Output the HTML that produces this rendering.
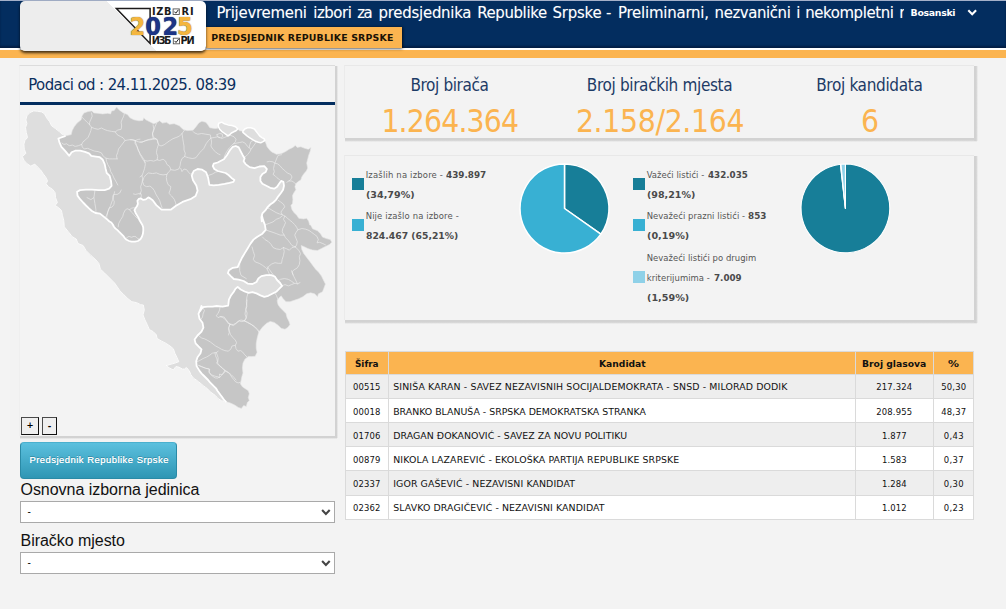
<!DOCTYPE html>
<html lang="bs">
<head>
<meta charset="utf-8">
<title>Prijevremeni izbori za predsjednika Republike Srpske</title>
<style>
*{box-sizing:border-box;margin:0;padding:0}
html,body{width:1006px;height:609px;overflow:hidden;background:#f3f3f3}
body{position:relative;font-family:"DejaVu Sans Condensed","DejaVu Sans","Liberation Sans",sans-serif;font-size:9.4px;color:#000}
.ar{font-family:"Liberation Sans",sans-serif}
b,.b{font-family:"DejaVu Sans","Liberation Sans",sans-serif;font-weight:bold}
.bc{font-family:"DejaVu Sans Condensed","DejaVu Sans",sans-serif;font-weight:bold}
.dvs{font-family:"DejaVu Sans","Liberation Sans",sans-serif}
.dv{font-family:"DejaVu Sans Condensed","DejaVu Sans","Liberation Sans",sans-serif}
.abs{position:absolute}
.t{position:absolute;white-space:nowrap;line-height:1}
.c{text-align:center}
/* header */
#hdr{position:absolute;left:0;top:0;width:1006px;height:48px;background:#032d5f;box-shadow:inset 0 -2px 2px rgba(0,0,20,.35)}
#wline{position:absolute;left:0;top:48px;width:1006px;height:2px;background:#fff}
#topline{position:absolute;left:0;top:0;width:1006px;height:1px;background:#a4b0c9}
#stripe{position:absolute;left:0;top:50px;width:1006px;height:8px;background:#fbb450}
#logo{position:absolute;left:20px;top:1px;width:186px;height:49.7px;border-radius:5px;background:linear-gradient(225deg,#ffffff 0,#ffffff 42.1%,#ededed 42.3%,#ededed 100%);box-shadow:0 2px 3px rgba(0,0,0,.75)}
#tab{position:absolute;left:206px;top:27px;width:196px;height:21px;background:#fbb450;box-shadow:0 0 3px 0.5px rgba(0,0,0,.85)}
#title{position:absolute;left:210px;top:0;width:693.5px;height:27px;overflow:hidden;color:#fff;font-size:16.6px;font-family:"DejaVu Sans Condensed","Liberation Sans",sans-serif;text-shadow:0 0 1px rgba(255,255,255,.3)}
/* panels */
.panel{position:absolute;background:#f3f3f3;border-top:1px solid #e8e8e8;border-left:1px solid #ebebeb}
.shr{position:absolute;background:linear-gradient(to right,#d2d2d2 0,#d2d2d2 55%,#e4e4e4 80%,#f3f3f3 100%)}
.shb{position:absolute;background:linear-gradient(to bottom,#d2d2d2 0,#d2d2d2 55%,#e4e4e4 80%,#f3f3f3 100%)}
.navy{color:#1d3b66}
.org{color:#fbb450}
.leg{color:#555}
.legb{color:#4a4a4a}
.sw{position:absolute;width:12px;height:12px}
/* table */
.cell{position:absolute;border-right:1px solid #ddd;border-bottom:1px solid #ddd}
.hd{background:#fbb450}
.odd{background:#eeeeee}
.evn{background:#ffffff}
.sel{position:absolute;left:20px;width:315px;height:22px;background:#fff;border:1px solid #a9a9a9}
</style>
</head>
<body>
<div id="hdr"></div>
<div id="topline"></div>
<div id="wline"></div>
<div id="stripe"></div>
<div id="tab"></div>
<div class="t b" style="left:211.2px;top:33.2px;font-size:9.4px;color:#1a1206"><span style="letter-spacing:0.171px">PREDSJEDNIK REPUBLIKE SRPSKE</span></div>
<div id="title">
<div class="t" style="left:6.4px;top:5px;letter-spacing:-0.26px">Prijevremeni</div>
<div class="t" style="left:103.2px;top:5px;letter-spacing:-0.45px">izbori</div>
<div class="t" style="left:147.3px;top:5px;letter-spacing:-1.60px">za</div>
<div class="t" style="left:168.6px;top:5px;letter-spacing:-0.25px">predsjednika</div>
<div class="t" style="left:267.2px;top:5px;letter-spacing:-0.36px">Republike</div>
<div class="t" style="left:342.4px;top:5px;letter-spacing:-0.16px">Srpske</div>
<div class="t" style="left:396.1px;top:5px;letter-spacing:0.00px">-</div>
<div class="t" style="left:408.0px;top:5px;letter-spacing:-0.21px">Preliminarni,</div>
<div class="t" style="left:504.6px;top:5px;letter-spacing:-0.41px">nezvanični</div>
<div class="t" style="left:586.2px;top:5px;letter-spacing:0.00px">i</div>
<div class="t" style="left:595.2px;top:5px;letter-spacing:-0.40px">nekompletni</div>
<div class="t" style="left:689.2px;top:5px;letter-spacing:-0.02px">rezultati</div>
</div>
<div class="t b" style="left:910.6px;top:7.9px;font-size:9.4px;color:#fff"><span style="letter-spacing:-0.315px">Bosanski</span></div>
<svg class="abs" style="left:966px;top:8px" width="12" height="9" viewBox="0 0 12 9"><path d="M2.3 2.3 L6.2 6.2 L10.1 2.3" fill="none" stroke="#fff" stroke-width="2.1"/></svg>
<div id="logo"></div>
<svg class="abs" style="left:110px;top:2px" width="90" height="48" viewBox="110 2 90 48"><path d="M116.4 8.5 L150.1 8.5 L150.1 43.4 Z" fill="none" stroke="#1c1a1a" stroke-width="1.5" stroke-linejoin="miter"/><rect x="173.1" y="8.9" width="6.2" height="5.6" fill="#fff" stroke="#555" stroke-width="0.9"/><path d="M174.4 11.6 L175.8 13.2 L178.4 9.8" fill="none" stroke="#222" stroke-width="1"/><rect x="173.3" y="38.2" width="6.2" height="5.6" fill="#fff" stroke="#555" stroke-width="0.9"/><path d="M174.6 40.9 L176 42.5 L178.6 39.1" fill="none" stroke="#222" stroke-width="1"/></svg>
<div class="t b" style="left:152px;top:6.6px;font-size:9.8px;color:#1a1a1a"><span style="letter-spacing:0.591px">IZB</span></div>
<div class="t b" style="left:181.4px;top:6.6px;font-size:9.8px;color:#1a1a1a"><span style="letter-spacing:1.097px">RI</span></div>
<div class="t b" style="left:151.8px;top:35.9px;font-size:9.8px;color:#1a1a1a"><span style="letter-spacing:-1.520px">ИЗБ</span></div>
<div class="t b" style="left:180.4px;top:35.9px;font-size:9.8px;color:#1a1a1a"><span style="letter-spacing:-1.191px">РИ</span></div>
<div class="t bc" style="left:129.6px;top:14.2px;font-size:25px;color:#f4b63f;text-shadow:0 0 1px #5a4a20">2</div>
<div class="t bc" style="left:145.3px;top:14.2px;font-size:25px;color:#1c3587;text-shadow:0 0 1px #0a1440">0</div>
<div class="t bc" style="left:162.4px;top:14.2px;font-size:25px;color:#1c3587;text-shadow:0 0 1px #0a1440">2</div>
<div class="t bc" style="left:177px;top:14.2px;font-size:25px;color:#f4b63f;text-shadow:0 0 1px #5a4a20">5</div>

<!-- left panel -->
<div class="panel" style="left:19px;top:65px;width:316px;height:371px;border-top-color:#dcdcdc;border-left-color:#efefef"></div><div class="shb" style="left:20px;top:436px;width:317px;height:3px"></div><div class="shr" style="left:335px;top:66px;width:3px;height:372px"></div>
<div class="t navy" style="left:28.3px;top:77.2px;font-size:16.6px;color:#0b2f5e"><span style="letter-spacing:-0.584px">Podaci od : 24.11.2025. 08:39</span></div>
<div class="abs" style="left:20px;top:102px;width:315px;height:3px;background:#032d5f"></div>
<svg class="abs" style="left:0;top:0" width="1006" height="609" viewBox="0 0 1006 609">
<defs><clipPath id="rsclip"><path d="M64.9 136.1 L71.2 134.6 L72.2 130.6 L74.2 126.7 L77.1 123.1 L81.1 119.8 L82.1 115.8 L84.0 112.9 L88.0 111.5 L91.9 110.9 L93.9 112.9 L97.8 113.3 L102.8 113.9 L107.7 113.3 L110.6 113.9 L111.6 110.9 L114.2 110.5 L116.6 107.0 L118.5 109.3 L120.5 110.9 L123.4 112.9 L127.4 114.5 L130.0 117.8 L133.9 119.8 L138.9 120.8 L142.8 120.4 L143.8 117.8 L145.8 119.8 L149.7 121.7 L153.6 123.7 L156.6 122.7 L159.6 120.8 L162.5 123.1 L166.5 122.3 L169.4 124.3 L174.3 123.7 L179.3 125.7 L183.2 129.6 L187.1 130.6 L193.1 130.2 L196.0 126.7 L199.0 122.7 L201.9 121.2 L205.9 122.3 L207.8 124.7 L209.8 127.7 L214.7 128.6 L217.7 128.3 L218.8 123.2 L221.7 122.1 L224.5 123.8 L228.0 124.9 L232.0 125.5 L235.5 126.7 L237.8 129.0 L239.5 130.7 L242.9 131.3 L244.7 129.0 L247.5 127.8 L251.0 127.8 L254.4 129.0 L256.1 131.3 L257.9 133.6 L259.6 135.9 L261.9 137.6 L264.2 138.7 L264.8 140.5 L265.9 143.3 L267.1 146.8 L269.4 149.7 L271.7 152.0 L275.0 153.4 L276.2 154.3 L279.1 153.9 L282.1 153.3 L286.0 151.3 L289.0 149.3 L292.9 147.4 L295.3 145.4 L297.2 147.4 L300.8 146.8 L304.7 148.3 L308.3 149.3 L311.0 147.4 L310.2 151.3 L308.7 155.2 L307.7 159.2 L306.7 163.1 L307.7 168.1 L306.3 171.0 L303.7 174.0 L301.8 176.9 L300.8 179.9 L297.8 181.8 L295.9 183.8 L294.9 186.8 L295.9 189.7 L293.9 192.7 L292.5 195.6 L292.9 199.6 L292.5 203.5 L290.9 205.5 L291.9 209.4 L293.9 212.4 L296.8 215.3 L298.8 218.3 L303.7 218.9 L306.7 218.3 L308.7 221.3 L309.7 225.0 L310.6 224.9 L312.6 228.8 L317.5 230.8 L320.5 233.7 L322.5 237.1 L326.4 238.6 L330.3 239.6 L331.9 242.2 L329.4 244.6 L325.4 246.5 L321.5 248.5 L317.5 250.5 L312.6 250.1 L307.7 248.5 L303.7 246.5 L301.2 245.5 L301.8 249.5 L303.7 253.4 L306.7 257.4 L309.7 261.3 L312.6 265.2 L315.6 269.2 L318.5 272.1 L321.5 276.1 L323.4 280.0 L325.4 284.0 L324.0 287.9 L322.5 291.8 L318.5 293.8 L317.5 296.8 L314.6 293.8 L310.6 292.8 L306.7 293.8 L302.8 296.8 L298.8 298.7 L294.9 300.1 L290.0 301.7 L286.0 301.7 L283.1 298.7 L281.1 295.8 L279.1 297.8 L277.1 300.7 L278.1 304.7 L280.1 307.6 L283.1 310.6 L286.0 313.5 L287.0 317.5 L289.0 321.4 L290.0 324.4 L288.0 327.3 L285.0 329.3 L281.1 328.3 L278.1 325.3 L274.2 322.4 L270.2 321.4 L266.3 323.4 L262.4 327.3 L259.4 331.3 L259.1 331.0 L258.1 334.6 L257.1 338.5 L256.2 343.4 L256.2 348.3 L257.1 352.3 L255.2 356.2 L251.6 356.6 L248.3 356.6 L244.9 359.2 L243.0 363.1 L242.4 368.1 L243.0 373.0 L241.8 376.9 L241.0 380.9 L240.4 383.8 L242.4 386.8 L245.3 388.7 L248.3 390.7 L249.3 393.7 L248.3 397.6 L249.3 400.6 L247.3 402.5 L246.3 406.5 L243.7 405.5 L241.4 408.4 L238.4 407.5 L235.5 405.5 L232.5 403.9 L229.6 402.7 L225.6 401.6 L223.8 401.4 L221.4 400.7 L218.9 399.2 L216.9 397.2 L215.0 395.2 L213.0 393.8 L211.0 392.3 L209.1 390.8 L207.6 388.8 L205.6 387.4 L203.6 385.9 L201.2 383.9 L198.7 381.9 L196.3 380.0 L193.8 378.5 L192.3 376.5 L190.8 374.6 L189.9 372.1 L188.4 369.6 L186.4 367.5 L184.4 369.1 L182.4 369.0 L178.8 367.1 L175.9 366.5 L173.3 370.0 L169.0 367.7 L166.0 365.7 L170.0 364.5 L174.9 363.1 L178.8 361.7 L176.8 357.2 L174.9 353.3 L173.3 348.7 L170.0 346.0 L166.0 343.4 L161.1 340.9 L157.1 338.5 L156.2 334.6 L153.2 331.6 L149.3 329.6 L147.3 324.7 L144.9 319.8 L143.0 314.9 L144.3 309.9 L143.3 305.0 L140.7 304.7 L136.7 302.7 L131.8 301.7 L127.9 298.7 L123.9 294.8 L120.0 290.9 L114.6 283.0 L109.7 278.1 L104.7 273.1 L100.4 269.2 L98.8 263.3 L95.9 259.9 L90.9 255.4 L86.0 250.5 L83.1 245.5 L78.1 243.6 L76.2 239.0 L72.2 236.7 L68.3 231.7 L64.3 226.8 L63.7 220.3 L62.4 215.3 L61.4 210.4 L58.4 207.5 L55.1 205.5 L57.4 202.5 L55.5 197.6 L55.1 192.7 L52.5 189.3 L48.6 186.8 L46.0 183.8 L47.6 180.9 L45.6 176.9 L43.3 174.0 L40.7 170.0 L37.7 167.1 L34.8 164.1 L30.8 166.1 L26.9 163.7 L23.9 160.2 L22.4 156.6 L25.9 153.3 L24.3 149.3 L23.9 144.4 L24.9 140.5 L27.5 137.5 L26.3 132.6 L25.5 127.7 L26.9 123.7 L25.9 119.8 L26.9 115.8 L29.9 112.5 L33.8 110.9 L37.7 111.3 L41.7 111.9 L44.6 113.9 L46.6 117.8 L49.6 121.7 L51.5 125.7 L55.5 128.6 L59.4 131.6 L62.4 134.6Z"/></clipPath></defs>
<path d="M64.9 136.1 L71.2 134.6 L72.2 130.6 L74.2 126.7 L77.1 123.1 L81.1 119.8 L82.1 115.8 L84.0 112.9 L88.0 111.5 L91.9 110.9 L93.9 112.9 L97.8 113.3 L102.8 113.9 L107.7 113.3 L110.6 113.9 L111.6 110.9 L114.2 110.5 L116.6 107.0 L118.5 109.3 L120.5 110.9 L123.4 112.9 L127.4 114.5 L130.0 117.8 L133.9 119.8 L138.9 120.8 L142.8 120.4 L143.8 117.8 L145.8 119.8 L149.7 121.7 L153.6 123.7 L156.6 122.7 L159.6 120.8 L162.5 123.1 L166.5 122.3 L169.4 124.3 L174.3 123.7 L179.3 125.7 L183.2 129.6 L187.1 130.6 L193.1 130.2 L196.0 126.7 L199.0 122.7 L201.9 121.2 L205.9 122.3 L207.8 124.7 L209.8 127.7 L214.7 128.6 L217.7 128.3 L218.8 123.2 L221.7 122.1 L224.5 123.8 L228.0 124.9 L232.0 125.5 L235.5 126.7 L237.8 129.0 L239.5 130.7 L242.9 131.3 L244.7 129.0 L247.5 127.8 L251.0 127.8 L254.4 129.0 L256.1 131.3 L257.9 133.6 L259.6 135.9 L261.9 137.6 L264.2 138.7 L264.8 140.5 L265.9 143.3 L267.1 146.8 L269.4 149.7 L271.7 152.0 L275.0 153.4 L276.2 154.3 L279.1 153.9 L282.1 153.3 L286.0 151.3 L289.0 149.3 L292.9 147.4 L295.3 145.4 L297.2 147.4 L300.8 146.8 L304.7 148.3 L308.3 149.3 L311.0 147.4 L310.2 151.3 L308.7 155.2 L307.7 159.2 L306.7 163.1 L307.7 168.1 L306.3 171.0 L303.7 174.0 L301.8 176.9 L300.8 179.9 L297.8 181.8 L295.9 183.8 L294.9 186.8 L295.9 189.7 L293.9 192.7 L292.5 195.6 L292.9 199.6 L292.5 203.5 L290.9 205.5 L291.9 209.4 L293.9 212.4 L296.8 215.3 L298.8 218.3 L303.7 218.9 L306.7 218.3 L308.7 221.3 L309.7 225.0 L310.6 224.9 L312.6 228.8 L317.5 230.8 L320.5 233.7 L322.5 237.1 L326.4 238.6 L330.3 239.6 L331.9 242.2 L329.4 244.6 L325.4 246.5 L321.5 248.5 L317.5 250.5 L312.6 250.1 L307.7 248.5 L303.7 246.5 L301.2 245.5 L301.8 249.5 L303.7 253.4 L306.7 257.4 L309.7 261.3 L312.6 265.2 L315.6 269.2 L318.5 272.1 L321.5 276.1 L323.4 280.0 L325.4 284.0 L324.0 287.9 L322.5 291.8 L318.5 293.8 L317.5 296.8 L314.6 293.8 L310.6 292.8 L306.7 293.8 L302.8 296.8 L298.8 298.7 L294.9 300.1 L290.0 301.7 L286.0 301.7 L283.1 298.7 L281.1 295.8 L279.1 297.8 L277.1 300.7 L278.1 304.7 L280.1 307.6 L283.1 310.6 L286.0 313.5 L287.0 317.5 L289.0 321.4 L290.0 324.4 L288.0 327.3 L285.0 329.3 L281.1 328.3 L278.1 325.3 L274.2 322.4 L270.2 321.4 L266.3 323.4 L262.4 327.3 L259.4 331.3 L259.1 331.0 L258.1 334.6 L257.1 338.5 L256.2 343.4 L256.2 348.3 L257.1 352.3 L255.2 356.2 L251.6 356.6 L248.3 356.6 L244.9 359.2 L243.0 363.1 L242.4 368.1 L243.0 373.0 L241.8 376.9 L241.0 380.9 L240.4 383.8 L242.4 386.8 L245.3 388.7 L248.3 390.7 L249.3 393.7 L248.3 397.6 L249.3 400.6 L247.3 402.5 L246.3 406.5 L243.7 405.5 L241.4 408.4 L238.4 407.5 L235.5 405.5 L232.5 403.9 L229.6 402.7 L225.6 401.6 L223.8 401.4 L221.4 400.7 L218.9 399.2 L216.9 397.2 L215.0 395.2 L213.0 393.8 L211.0 392.3 L209.1 390.8 L207.6 388.8 L205.6 387.4 L203.6 385.9 L201.2 383.9 L198.7 381.9 L196.3 380.0 L193.8 378.5 L192.3 376.5 L190.8 374.6 L189.9 372.1 L188.4 369.6 L186.4 367.5 L184.4 369.1 L182.4 369.0 L178.8 367.1 L175.9 366.5 L173.3 370.0 L169.0 367.7 L166.0 365.7 L170.0 364.5 L174.9 363.1 L178.8 361.7 L176.8 357.2 L174.9 353.3 L173.3 348.7 L170.0 346.0 L166.0 343.4 L161.1 340.9 L157.1 338.5 L156.2 334.6 L153.2 331.6 L149.3 329.6 L147.3 324.7 L144.9 319.8 L143.0 314.9 L144.3 309.9 L143.3 305.0 L140.7 304.7 L136.7 302.7 L131.8 301.7 L127.9 298.7 L123.9 294.8 L120.0 290.9 L114.6 283.0 L109.7 278.1 L104.7 273.1 L100.4 269.2 L98.8 263.3 L95.9 259.9 L90.9 255.4 L86.0 250.5 L83.1 245.5 L78.1 243.6 L76.2 239.0 L72.2 236.7 L68.3 231.7 L64.3 226.8 L63.7 220.3 L62.4 215.3 L61.4 210.4 L58.4 207.5 L55.1 205.5 L57.4 202.5 L55.5 197.6 L55.1 192.7 L52.5 189.3 L48.6 186.8 L46.0 183.8 L47.6 180.9 L45.6 176.9 L43.3 174.0 L40.7 170.0 L37.7 167.1 L34.8 164.1 L30.8 166.1 L26.9 163.7 L23.9 160.2 L22.4 156.6 L25.9 153.3 L24.3 149.3 L23.9 144.4 L24.9 140.5 L27.5 137.5 L26.3 132.6 L25.5 127.7 L26.9 123.7 L25.9 119.8 L26.9 115.8 L29.9 112.5 L33.8 110.9 L37.7 111.3 L41.7 111.9 L44.6 113.9 L46.6 117.8 L49.6 121.7 L51.5 125.7 L55.5 128.6 L59.4 131.6 L62.4 134.6Z" fill="#c6c6c6" stroke="#e8e8e8" stroke-width="0.6" stroke-linejoin="round"/>
<g clip-path="url(#rsclip)">
<path d="M82.3 117.5 L84.3 119.4 L86.9 122.1 L89.6 124.7 L91.5 127.3 L90.9 130.6 L89.6 133.9 L88.2 137.2 L85.6 139.8 L83.0 141.8 L81.7 144.4 L82.3 147.0 L84.3 149.0 L87.6 148.3 L90.9 149.7 L94.2 151.0 L98.1 151.6 L101.4 152.9 L103.3 156.2 L106.0 158.2 L109.3 158.9 L112.5 158.9 L117.1 158.9" fill="none" stroke="#f4f4f4" stroke-width="0.7" stroke-linejoin="round" stroke-linecap="round" opacity="0.8"/>
<path d="M91.5 112.9 L92.2 116.2 L90.9 119.4 L89.6 122.1 L89.6 124.7" fill="none" stroke="#f4f4f4" stroke-width="0.7" stroke-linejoin="round" stroke-linecap="round" opacity="0.8"/>
<path d="M91.5 127.3 L94.8 128.6 L98.1 129.3 L101.4 128.0 L104.0 129.3 L107.3 130.6 L111.2 131.3 L115.2 131.9 L117.8 130.0 L121.1 129.3 L121.7 126.0 L121.1 122.1 L122.4 118.8 L123.7 116.2 L124.4 113.5" fill="none" stroke="#f4f4f4" stroke-width="0.7" stroke-linejoin="round" stroke-linecap="round" opacity="0.8"/>
<path d="M115.2 131.9 L117.1 134.6 L120.4 136.5 L123.1 137.8 L125.0 140.5 L123.1 143.1 L121.1 145.7 L118.5 149.0 L117.8 152.3 L116.5 155.6 L117.1 158.9" fill="none" stroke="#f4f4f4" stroke-width="0.7" stroke-linejoin="round" stroke-linecap="round" opacity="0.8"/>
<path d="M125.0 140.5 L129.0 139.8 L132.2 139.4 L135.5 140.5 L138.2 139.4 L140.0 139.2" fill="none" stroke="#f4f4f4" stroke-width="0.7" stroke-linejoin="round" stroke-linecap="round" opacity="0.8"/>
<path d="M135.5 140.5 L134.9 143.1 L136.8 146.4 L138.2 150.3 L140.0 153.6" fill="none" stroke="#f4f4f4" stroke-width="0.7" stroke-linejoin="round" stroke-linecap="round" opacity="0.8"/>
<path d="M106.0 158.2 L106.6 161.5 L107.9 164.8 L109.9 168.1 L110.6 171.3 L112.5 174.6 L113.9 177.9 L115.8 181.2 L117.8 185.0" fill="none" stroke="#f4f4f4" stroke-width="0.7" stroke-linejoin="round" stroke-linecap="round" opacity="0.8"/>
<path d="M81.7 144.4 L78.4 145.7 L75.1 146.4 L72.5 145.1 L69.2 145.7 L66.6 143.8 L63.9 144.4 L62.0 143.1" fill="none" stroke="#f4f4f4" stroke-width="0.7" stroke-linejoin="round" stroke-linecap="round" opacity="0.8"/>
<path d="M130.2 139.8 L134.8 140.5 L138.1 141.8 L142.0 142.4 L145.3 140.5 L149.9 139.2 L153.2 138.5 L157.1 139.2 L157.8 143.1 L158.5 143.8" fill="none" stroke="#f4f4f4" stroke-width="0.7" stroke-linejoin="round" stroke-linecap="round" opacity="0.8"/>
<path d="M153.2 138.5 L152.5 133.9 L153.9 130.0 L155.2 126.0 L156.5 123.4" fill="none" stroke="#f4f4f4" stroke-width="0.7" stroke-linejoin="round" stroke-linecap="round" opacity="0.8"/>
<path d="M134.8 140.5 L136.8 145.7 L138.8 151.0 L140.7 155.6 L143.3 160.2 L145.3 162.8" fill="none" stroke="#f4f4f4" stroke-width="0.7" stroke-linejoin="round" stroke-linecap="round" opacity="0.8"/>
<path d="M104.9 217.6 L106.4 215.6 L107.9 212.2 L109.4 207.7 L111.8 207.2 L113.8 204.8 L114.3 201.8 L113.3 199.4 L112.8 195.9 L113.8 194.4 L117.2 194.4 L119.7 193.0 L121.2 190.0" fill="none" stroke="#f4f4f4" stroke-width="0.7" stroke-linejoin="round" stroke-linecap="round" opacity="0.8"/>
<path d="M118.2 226.9 L118.7 223.5 L120.7 219.6 L122.7 216.6 L123.6 213.2 L125.1 210.2 L127.1 208.7 L129.6 209.7 L131.5 208.2 L134.0 207.7 L135.5 208.2" fill="none" stroke="#f4f4f4" stroke-width="0.7" stroke-linejoin="round" stroke-linecap="round" opacity="0.8"/>
<path d="M129.6 209.7 L131.5 212.2 L134.0 214.6 L136.0 217.1 L137.9 218.6" fill="none" stroke="#f4f4f4" stroke-width="0.7" stroke-linejoin="round" stroke-linecap="round" opacity="0.8"/>
<path d="M126.6 237.8 L129.1 236.3 L131.5 237.3 L134.0 236.3 L136.0 236.8 L137.9 238.8 L140.4 239.3" fill="none" stroke="#f4f4f4" stroke-width="0.7" stroke-linejoin="round" stroke-linecap="round" opacity="0.8"/>
<path d="M133.5 193.9 L135.5 194.4 L137.9 193.9 L140.4 193.0 L141.4 194.9 L140.9 198.4" fill="none" stroke="#f4f4f4" stroke-width="0.7" stroke-linejoin="round" stroke-linecap="round" opacity="0.8"/>
<path d="M94.9 190.7 L93.9 197.6 L94.9 203.5 L95.9 209.4 L95.9 213.0" fill="none" stroke="#f4f4f4" stroke-width="0.7" stroke-linejoin="round" stroke-linecap="round" opacity="0.8"/>
<path d="M114.6 191.7 L112.6 199.6 L110.6 205.5 L107.7 211.4 L106.7 217.3 L107.7 220.3" fill="none" stroke="#f4f4f4" stroke-width="0.7" stroke-linejoin="round" stroke-linecap="round" opacity="0.8"/>
<path d="M87.0 197.6 L90.9 199.6 L93.9 197.6" fill="none" stroke="#f4f4f4" stroke-width="0.7" stroke-linejoin="round" stroke-linecap="round" opacity="0.8"/>
<path d="M153.1 125.0 L153.8 128.9 L152.5 132.9 L153.1 136.8 L155.8 138.8 L157.7 140.8 L158.4 144.7 L161.0 146.0 L164.3 144.7 L166.9 142.7 L169.6 140.8 L172.8 138.8 L176.1 137.5 L179.4 136.2 L182.0 133.5 L184.0 130.9 L185.3 128.9" fill="none" stroke="#f4f4f4" stroke-width="0.7" stroke-linejoin="round" stroke-linecap="round" opacity="0.8"/>
<path d="M158.4 144.7 L157.1 148.6 L156.4 152.6 L157.7 156.5 L157.1 159.8 L159.7 160.5 L163.0 159.2 L165.6 161.1 L166.9 164.4 L169.6 166.4 L170.9 169.7 L168.9 171.6 L166.9 174.3 L166.3 177.5 L166.9 181.5 L168.2 184.8 L170.9 186.7 L170.2 190.0 L168.9 193.3 L171.5 195.9 L174.2 199.2 L175.5 202.5 L176.1 205.0 L176.8 207.1" fill="none" stroke="#f4f4f4" stroke-width="0.7" stroke-linejoin="round" stroke-linecap="round" opacity="0.8"/>
<path d="M140.0 142.1 L143.9 141.4 L147.9 140.1 L152.5 139.4 L155.8 138.8" fill="none" stroke="#f4f4f4" stroke-width="0.7" stroke-linejoin="round" stroke-linecap="round" opacity="0.8"/>
<path d="M157.1 159.8 L153.8 161.1 L150.5 160.5 L147.2 161.1 L144.6 160.5 L142.0 156.5 L141.3 155.2 L140.0 154.6" fill="none" stroke="#f4f4f4" stroke-width="0.7" stroke-linejoin="round" stroke-linecap="round" opacity="0.8"/>
<path d="M144.6 160.5 L145.3 164.4 L144.6 168.3 L143.3 172.3 L142.0 175.6 L140.0 176.9" fill="none" stroke="#f4f4f4" stroke-width="0.7" stroke-linejoin="round" stroke-linecap="round" opacity="0.8"/>
<path d="M166.9 174.3 L163.0 174.9 L159.7 174.3 L156.4 172.9 L152.5 173.6 L148.5 172.9 L145.9 174.9 L143.9 177.5 L142.6 181.5 L143.9 185.4 L146.6 186.7 L149.9 186.1 L152.5 188.1 L154.4 190.7 L155.8 194.0 L157.7 197.2 L159.7 200.5 L161.0 205.0 L162.1 207.8" fill="none" stroke="#f4f4f4" stroke-width="0.7" stroke-linejoin="round" stroke-linecap="round" opacity="0.8"/>
<path d="M142.0 175.6 L142.6 178.9 L142.0 182.8 L140.7 186.7 L141.3 190.7 L140.0 194.6" fill="none" stroke="#f4f4f4" stroke-width="0.7" stroke-linejoin="round" stroke-linecap="round" opacity="0.8"/>
<path d="M170.9 169.7 L174.8 170.3 L178.8 169.0 L180.1 165.7 L180.7 161.8 L182.0 158.5 L184.7 156.5 L185.3 153.2 L184.0 150.0 L184.0 146.0 L183.3 142.1 L182.7 138.1 L182.0 133.5" fill="none" stroke="#f4f4f4" stroke-width="0.7" stroke-linejoin="round" stroke-linecap="round" opacity="0.8"/>
<path d="M184.7 156.5 L188.6 157.8 L192.5 158.5 L195.8 157.8 L197.8 155.2 L199.8 152.6 L201.7 150.6 L203.7 148.6 L205.0 146.0 L206.3 143.4 L208.3 140.8 L210.9 138.1 L210.3 134.9 L205.7 134.2 L201.7 133.5 L197.8 134.2 L194.5 132.9 L193.2 131.6" fill="none" stroke="#f4f4f4" stroke-width="0.7" stroke-linejoin="round" stroke-linecap="round" opacity="0.8"/>
<path d="M210.9 138.1 L211.6 142.1 L210.9 146.0 L212.9 149.3 L215.5 151.9 L218.2 153.9 L220.0 154.6" fill="none" stroke="#f4f4f4" stroke-width="0.7" stroke-linejoin="round" stroke-linecap="round" opacity="0.8"/>
<path d="M180.7 168.3 L182.0 171.6 L184.0 169.0 L186.6 169.7 L188.6 172.3 L190.6 174.3 L192.5 172.3" fill="none" stroke="#f4f4f4" stroke-width="0.7" stroke-linejoin="round" stroke-linecap="round" opacity="0.8"/>
<path d="M210.9 138.1 L214.2 137.5 L217.5 136.8 L220.0 137.5" fill="none" stroke="#f4f4f4" stroke-width="0.7" stroke-linejoin="round" stroke-linecap="round" opacity="0.8"/>
<path d="M221.5 138.6 L224.8 137.3 L228.1 136.0 L230.7 135.4 L234.0 136.7 L236.0 139.3 L235.3 141.9 L233.3 143.9" fill="none" stroke="#f4f4f4" stroke-width="0.7" stroke-linejoin="round" stroke-linecap="round" opacity="0.8"/>
<path d="M224.8 160.3 L224.2 157.0 L225.5 153.8 L227.4 150.5 L229.4 147.8 L231.4 145.9 L233.3 143.9 L236.0 143.2 L239.3 142.6 L242.5 141.9 L245.2 143.2 L247.1 145.9 L249.1 147.8 L251.1 149.2 L249.8 151.8 L247.8 154.4 L245.8 156.4 L243.9 157.7" fill="none" stroke="#f4f4f4" stroke-width="0.7" stroke-linejoin="round" stroke-linecap="round" opacity="0.8"/>
<path d="M249.1 147.8 L249.8 144.6 L251.1 141.3 L253.1 140.6" fill="none" stroke="#f4f4f4" stroke-width="0.7" stroke-linejoin="round" stroke-linecap="round" opacity="0.8"/>
<path d="M251.1 149.2 L253.1 146.5 L255.0 143.9 L256.3 141.9" fill="none" stroke="#f4f4f4" stroke-width="0.7" stroke-linejoin="round" stroke-linecap="round" opacity="0.8"/>
<path d="M208.4 175.4 L212.3 174.1 L215.6 172.1 L218.2 171.5" fill="none" stroke="#f4f4f4" stroke-width="0.7" stroke-linejoin="round" stroke-linecap="round" opacity="0.8"/>
<path d="M216.9 134.7 L217.6 136.7 L220.2 138.0 L222.8 136.7 L222.2 134.0 L219.6 133.4 L216.9 134.7" fill="none" stroke="#f4f4f4" stroke-width="0.7" stroke-linejoin="round" stroke-linecap="round" opacity="0.8"/>
<path d="M281.5 154.7 L278.2 155.4 L276.9 158.0 L275.6 161.3 L274.3 164.6 L273.6 168.5 L274.3 171.8 L273.0 174.4 L275.0 175.7 L276.9 177.7 L279.6 179.7" fill="none" stroke="#f4f4f4" stroke-width="0.7" stroke-linejoin="round" stroke-linecap="round" opacity="0.8"/>
<path d="M267.1 161.9 L269.7 161.3 L273.0 161.9 L275.0 163.2 L277.6 163.9 L280.2 165.9 L282.2 168.5 L284.8 170.5 L287.4 173.1 L290.7 174.4 L292.0 177.0 L290.7 179.7 L288.8 181.0 L286.8 182.3" fill="none" stroke="#f4f4f4" stroke-width="0.7" stroke-linejoin="round" stroke-linecap="round" opacity="0.8"/>
<path d="M288.8 181.0 L292.0 181.0 L294.7 182.9 L296.6 184.9" fill="none" stroke="#f4f4f4" stroke-width="0.7" stroke-linejoin="round" stroke-linecap="round" opacity="0.8"/>
<path d="M278.2 200.3 L280.9 202.2 L283.5 204.2 L284.8 206.8 L282.8 209.4 L280.9 212.1 L282.2 214.7 L284.8 216.0 L287.4 218.0 L289.4 220.0 L292.0 221.9 L294.7 224.6 L296.6 227.2 L297.9 229.8 L296.0 232.4 L294.7 235.1 L296.0 238.3 L297.3 241.6 L296.6 244.9 L295.3 246.9" fill="none" stroke="#f4f4f4" stroke-width="0.7" stroke-linejoin="round" stroke-linecap="round" opacity="0.8"/>
<path d="M265.8 208.1 L269.7 208.8 L273.0 210.8 L276.3 212.7 L279.6 214.0 L282.2 214.7" fill="none" stroke="#f4f4f4" stroke-width="0.7" stroke-linejoin="round" stroke-linecap="round" opacity="0.8"/>
<path d="M284.8 216.0 L283.5 219.3 L285.5 222.6 L284.2 225.9 L282.8 228.5 L282.2 231.8 L284.2 235.1 L285.5 237.7 L288.1 240.3 L290.1 242.9 L292.0 245.6 L295.3 246.9" fill="none" stroke="#f4f4f4" stroke-width="0.7" stroke-linejoin="round" stroke-linecap="round" opacity="0.8"/>
<path d="M265.8 224.6 L269.7 223.2 L273.0 221.9 L276.3 219.3 L279.6 218.0 L282.2 216.0" fill="none" stroke="#f4f4f4" stroke-width="0.7" stroke-linejoin="round" stroke-linecap="round" opacity="0.8"/>
<path d="M265.8 229.8 L269.0 231.1 L273.0 232.4 L276.9 233.8 L280.2 235.1 L284.2 235.1" fill="none" stroke="#f4f4f4" stroke-width="0.7" stroke-linejoin="round" stroke-linecap="round" opacity="0.8"/>
<path d="M262.5 237.0 L265.1 239.7 L268.4 241.6 L271.0 244.3 L273.0 247.5 L276.3 248.9 L280.2 249.5 L283.5 247.5 L286.8 248.9 L289.4 250.2 L292.0 247.5 L295.3 246.9" fill="none" stroke="#f4f4f4" stroke-width="0.7" stroke-linejoin="round" stroke-linecap="round" opacity="0.8"/>
<path d="M297.9 229.8 L301.9 228.5 L305.8 229.2 L309.1 230.5 L311.7 232.4 L314.4 234.4 L317.0 236.4 L318.3 239.7 L317.0 242.9 L319.6 242.3 L322.9 243.6 L325.5 244.9" fill="none" stroke="#f4f4f4" stroke-width="0.7" stroke-linejoin="round" stroke-linecap="round" opacity="0.8"/>
<path d="M283.5 247.5 L284.2 251.5 L283.5 255.4 L282.2 259.4 L281.5 263.3 L278.2 263.3 L275.0 262.7 L271.7 264.0 L268.4 266.6 L267.1 269.2 L268.4 271.8 L269.7 275.0" fill="none" stroke="#f4f4f4" stroke-width="0.7" stroke-linejoin="round" stroke-linecap="round" opacity="0.8"/>
<path d="M295.3 246.9 L298.6 250.2 L300.6 253.5 L299.3 256.7 L299.9 260.7 L299.3 264.6 L297.3 267.9 L294.0 269.9 L292.0 271.8 L293.3 275.0" fill="none" stroke="#f4f4f4" stroke-width="0.7" stroke-linejoin="round" stroke-linecap="round" opacity="0.8"/>
<path d="M252.0 246.9 L253.3 251.5 L254.6 255.4 L253.3 259.4 L255.3 262.0 L259.2 263.3 L262.5 265.3 L265.1 267.2 L267.1 269.2" fill="none" stroke="#f4f4f4" stroke-width="0.7" stroke-linejoin="round" stroke-linecap="round" opacity="0.8"/>
<path d="M248.2 292.4 L246.9 297.0 L246.3 301.6 L246.9 306.2 L245.6 310.2 L245.0 314.1 L246.3 318.1 L244.3 320.7 L241.0 320.0 L237.7 321.3 L235.8 323.3 L233.1 324.6 L229.9 324.0 L228.5 328.6 L229.2 332.5 L228.5 335.0" fill="none" stroke="#f4f4f4" stroke-width="0.7" stroke-linejoin="round" stroke-linecap="round" opacity="0.8"/>
<path d="M244.3 320.7 L247.6 322.7 L251.5 324.6 L254.8 326.6 L257.4 329.2 L259.4 331.2" fill="none" stroke="#f4f4f4" stroke-width="0.7" stroke-linejoin="round" stroke-linecap="round" opacity="0.8"/>
<path d="M220.0 316.7 L222.6 317.4 L225.9 320.0 L227.9 323.3 L229.9 324.0" fill="none" stroke="#f4f4f4" stroke-width="0.7" stroke-linejoin="round" stroke-linecap="round" opacity="0.8"/>
<path d="M274.5 292.4 L276.5 295.7 L277.8 299.0 L278.5 302.3" fill="none" stroke="#f4f4f4" stroke-width="0.7" stroke-linejoin="round" stroke-linecap="round" opacity="0.8"/>
<path d="M281.7 285.9 L285.0 284.6 L288.3 285.9 L291.6 284.6 L294.9 283.2 L297.5 283.9 L300.0 282.6" fill="none" stroke="#f4f4f4" stroke-width="0.7" stroke-linejoin="round" stroke-linecap="round" opacity="0.8"/>
<path d="M277.8 281.3 L280.4 279.3 L284.4 278.6 L288.3 279.3 L291.6 281.3 L294.2 283.2" fill="none" stroke="#f4f4f4" stroke-width="0.7" stroke-linejoin="round" stroke-linecap="round" opacity="0.8"/>
<path d="M267.3 266.8 L269.3 269.4 L271.2 272.1 L273.9 275.4" fill="none" stroke="#f4f4f4" stroke-width="0.7" stroke-linejoin="round" stroke-linecap="round" opacity="0.8"/>
<path d="M291.6 270.8 L292.9 274.7 L294.9 278.6 L297.5 283.9" fill="none" stroke="#f4f4f4" stroke-width="0.7" stroke-linejoin="round" stroke-linecap="round" opacity="0.8"/>
<path d="M239.7 262.9 L239.7 270.8 L241.0 275.4 L246.3 278.6" fill="none" stroke="#f4f4f4" stroke-width="0.7" stroke-linejoin="round" stroke-linecap="round" opacity="0.8"/>
<path d="M220.2 305.9 L219.6 309.9 L218.2 313.1 L216.3 315.8 L218.2 317.7 L220.9 316.4 L224.2 317.1 L226.1 319.7 L228.1 322.3 L230.1 324.3 L233.3 325.6 L236.0 323.6 L239.3 321.0 L241.9 321.7 L244.5 321.0 L246.5 317.1 L247.1 313.1 L245.8 309.2 L246.5 305.3 L247.1 300.0" fill="none" stroke="#f4f4f4" stroke-width="0.7" stroke-linejoin="round" stroke-linecap="round" opacity="0.8"/>
<path d="M244.5 321.0 L247.8 322.3 L251.1 324.3 L254.4 326.9 L257.0 329.6 L259.0 332.2" fill="none" stroke="#f4f4f4" stroke-width="0.7" stroke-linejoin="round" stroke-linecap="round" opacity="0.8"/>
<path d="M230.1 324.3 L228.8 327.6 L229.4 331.5 L230.7 334.8 L232.7 337.4 L235.3 340.1 L236.6 342.7 L235.3 345.3 L236.0 348.6 L237.9 351.2 L240.6 350.6 L242.5 351.9 L244.5 354.5 L247.1 357.1" fill="none" stroke="#f4f4f4" stroke-width="0.7" stroke-linejoin="round" stroke-linecap="round" opacity="0.8"/>
<path d="M235.3 345.3 L232.0 346.0 L230.7 349.3 L228.1 351.2 L224.8 350.6 L221.5 349.3 L218.2 347.3 L215.6 346.0 L213.0 344.0 L210.4 342.0 L207.1 340.1 L204.4 338.8 L201.8 338.1 L199.2 336.1" fill="none" stroke="#f4f4f4" stroke-width="0.7" stroke-linejoin="round" stroke-linecap="round" opacity="0.8"/>
<path d="M216.3 352.5 L218.2 357.8 L217.6 363.1 L219.6 365.7 L222.2 367.7 L224.8 370.3 L223.5 372.9 L221.5 375.5 L219.6 377.5" fill="none" stroke="#f4f4f4" stroke-width="0.7" stroke-linejoin="round" stroke-linecap="round" opacity="0.8"/>
<path d="M218.2 351.2 L216.3 352.5 L212.3 353.2 L209.7 355.2 L206.4 357.1 L203.1 358.5 L199.9 360.4 L197.2 361.7" fill="none" stroke="#f4f4f4" stroke-width="0.7" stroke-linejoin="round" stroke-linecap="round" opacity="0.8"/>
<path d="M199.2 365.7 L202.5 367.0 L205.8 368.3 L209.7 369.0 L209.0 372.2 L211.7 374.9 L215.0 376.2 L218.2 376.8 L219.6 377.5" fill="none" stroke="#f4f4f4" stroke-width="0.7" stroke-linejoin="round" stroke-linecap="round" opacity="0.8"/>
<path d="M224.8 370.3 L228.1 372.2 L231.4 374.9 L234.0 377.5 L236.0 380.0" fill="none" stroke="#f4f4f4" stroke-width="0.7" stroke-linejoin="round" stroke-linecap="round" opacity="0.8"/>
<path d="M203.1 307.9 L204.4 310.5 L203.1 313.8 L202.5 317.1 L200.5 319.7" fill="none" stroke="#f4f4f4" stroke-width="0.7" stroke-linejoin="round" stroke-linecap="round" opacity="0.8"/>
<path d="M215.0 352.9 L215.5 355.8 L216.9 358.8 L217.4 361.7 L216.5 363.2 L218.4 364.7 L220.4 366.7 L222.9 368.6 L225.3 371.1 L228.3 372.6 L230.2 374.6 L231.7 377.0 L233.7 379.5 L235.7 381.9 L238.1 382.9 L240.0 382.4" fill="none" stroke="#f4f4f4" stroke-width="0.7" stroke-linejoin="round" stroke-linecap="round" opacity="0.8"/>
<path d="M198.2 365.2 L201.7 366.7 L205.6 368.2 L209.1 369.1 L209.1 372.1 L210.5 374.6 L213.0 376.5 L215.5 378.0 L217.9 378.0 L219.9 376.5 L219.4 374.1 L221.9 374.6 L223.8 373.1 L225.3 371.1" fill="none" stroke="#f4f4f4" stroke-width="0.7" stroke-linejoin="round" stroke-linecap="round" opacity="0.8"/>
</g>
<path d="M62.4 134.6 L59.4 131.6 L55.5 128.6 L51.5 125.7 L49.6 121.7 L46.6 117.8 L44.6 113.9 L41.7 111.9 L37.7 111.3 L33.8 110.9 L29.9 112.5 L26.9 115.8 L25.9 119.8 L26.9 123.7 L25.5 127.7 L26.3 132.6 L27.5 137.5 L24.9 140.5 L23.9 144.4 L24.3 149.3 L25.9 153.3 L22.4 156.6 L23.9 160.2 L26.9 163.7 L30.8 166.1 L34.8 164.1 L37.7 167.1 L40.7 170.0 L43.3 174.0 L45.6 176.9 L47.6 180.9 L46.0 183.8 L48.6 186.8 L52.5 189.3 L55.1 192.7 L55.5 197.6 L57.4 202.5 L55.1 205.5 L58.4 207.5 L61.4 210.4 L62.4 215.3 L63.7 220.3 L64.3 226.8 L68.3 231.7 L72.2 236.7 L76.2 239.0 L78.1 243.6 L83.1 245.5 L86.0 250.5 L90.9 255.4 L95.9 259.9 L98.8 263.3 L100.4 269.2 L104.7 273.1 L109.7 278.1 L114.6 283.0 L120.0 290.9 L123.9 294.8 L127.9 298.7 L131.8 301.7 L136.7 302.7 L140.7 304.7 L143.3 305.0 L144.3 309.9 L143.0 314.9 L144.9 319.8 L147.3 324.7 L149.3 329.6 L153.2 331.6 L156.2 334.6 L157.1 338.5 L161.1 340.9 L166.0 343.4 L170.0 346.0 L173.3 348.7 L174.9 353.3 L176.8 357.2 L178.8 361.7 L174.9 363.1 L170.0 364.5 L166.0 365.7 L169.0 367.7 L173.3 370.0 L175.9 366.5 L178.8 367.1 L182.4 369.0 L184.4 369.1 L186.4 367.5 L188.4 369.6 L189.9 372.1 L190.8 374.6 L192.3 376.5 L193.8 378.5 L196.3 380.0 L198.7 381.9 L201.2 383.9 L203.6 385.9 L205.6 387.4 L207.6 388.8 L209.1 390.8 L211.0 392.3 L213.0 393.8 L215.0 395.2 L216.9 397.2 L218.9 399.2 L221.4 400.7 L223.8 401.4 L225.8 401.7 L224.8 400.7 L223.3 398.7 L221.9 396.7 L220.4 394.8 L218.9 392.8 L217.4 390.8 L216.0 388.3 L214.0 386.4 L212.0 384.4 L210.0 382.4 L208.1 380.0 L205.6 377.5 L203.6 375.5 L201.7 373.6 L199.7 371.1 L196.6 366.1 L196.2 361.2 L197.5 357.2 L200.5 353.3 L201.5 349.3 L198.5 346.4 L195.6 343.4 L194.6 339.5 L197.5 335.5 L201.5 331.6 L203.4 327.7 L202.5 322.7 L199.5 318.8 L198.5 313.9 L200.5 308.9 L201.5 306.0 L199.8 311.6 L202.8 307.2 L207.7 306.6 L212.6 306.6 L216.6 306.0 L222.5 306.6 L228.0 305.6 L228.3 304.7 L228.9 299.7 L230.8 295.8 L233.8 291.8 L235.4 288.9 L237.7 286.9 L240.7 289.5 L244.6 291.5 L248.6 292.8 L252.5 292.2 L256.5 293.4 L260.4 295.4 L264.3 296.8 L268.3 295.8 L272.2 293.8 L276.2 291.8 L279.1 288.9 L282.1 285.9 L280.1 283.0 L277.1 280.0 L274.8 276.5 L271.2 275.1 L266.3 275.1 L261.4 276.1 L258.4 278.4 L256.5 282.0 L252.5 284.0 L247.6 283.6 L243.6 281.0 L238.7 279.6 L233.8 279.0 L230.8 276.1 L227.9 273.1 L228.9 270.2 L232.8 267.8 L237.7 267.2 L239.3 263.3 L241.7 258.3 L244.6 253.4 L247.6 248.5 L250.5 243.6 L253.5 239.6 L257.4 236.7 L262.4 233.7 L265.7 229.8 L264.9 224.9 L263.0 219.9 L261.8 215.0 L261.8 221.3 L261.4 217.3 L262.4 213.4 L265.3 210.4 L267.3 207.5 L270.2 204.5 L273.2 202.5 L276.2 199.6 L278.1 196.6 L281.1 192.7 L283.1 189.7 L284.0 185.8 L283.4 181.8 L281.1 180.9 L279.1 183.8 L277.1 186.8 L274.2 188.7 L270.2 187.8 L266.3 185.8 L262.4 183.8 L260.4 180.9 L260.4 176.9 L262.4 174.0 L265.7 172.0 L266.9 169.0 L264.3 166.1 L259.4 166.5 L254.5 168.1 L249.6 167.1 L245.6 164.1 L243.6 161.2 L244.6 158.2 L242.7 155.2 L240.7 151.3 L238.7 147.4 L235.8 146.0 L232.8 146.8 L229.9 150.3 L226.9 155.2 L223.9 159.2 L220.0 161.2 L217.7 162.5 L213.7 163.7 L212.8 166.1 L214.3 169.0 L217.7 171.0 L221.6 172.0 L225.6 173.0 L228.5 175.0 L231.5 177.9 L234.4 179.9 L233.4 181.8 L229.5 182.8 L224.6 183.8 L218.7 184.8 L213.7 185.4 L209.4 184.8 L208.1 177.6 L206.1 172.3 L202.2 169.7 L197.6 169.0 L193.7 171.0 L191.7 175.6 L193.0 180.2 L196.3 185.4 L197.6 190.7 L195.6 196.0 L190.4 199.2 L182.5 201.9 L176.0 205.8 L170.7 209.7 L161.5 209.7 L156.3 205.1 L152.7 200.3 L150.2 198.4 L148.3 197.4 L145.8 199.4 L143.3 199.9 L140.9 198.4 L138.9 198.9 L137.4 200.8 L137.9 203.8 L136.9 206.3 L135.5 208.2 L134.5 210.2 L135.5 212.7 L136.9 215.1 L138.4 217.6 L139.4 220.0 L140.9 222.5 L142.4 225.0 L143.2 227.4 L143.3 230.4 L142.9 233.8 L141.9 236.8 L140.4 239.3 L137.9 241.0 L135.0 241.7 L131.5 241.7 L129.1 241.0 L126.6 239.8 L124.6 237.8 L123.2 235.8 L121.2 233.8 L119.2 231.9 L117.2 229.9 L115.3 228.4 L113.8 226.5 L112.8 224.5 L111.3 222.5 L109.4 221.5 L107.4 219.6 L104.9 217.6 L102.5 215.6 L100.0 213.6 L95.5 213.0 L91.9 211.0 L89.0 208.4 L86.0 205.5 L83.1 202.5 L80.1 199.2 L77.5 195.6 L77.1 191.7 L80.1 190.1 L86.0 189.7 L91.9 189.7 L98.8 190.1 L104.7 190.1 L109.1 188.7 L111.6 185.8 L111.0 180.9 L109.7 175.9 L106.7 173.0 L105.7 169.0 L104.7 164.1 L102.8 159.8 L99.8 157.2 L95.9 156.6 L91.3 155.8 L89.0 153.3 L85.0 151.9 L80.1 150.7 L75.2 150.7 L71.6 152.3 L69.3 155.8 L64.9 150.7 L61.4 146.8 L59.4 142.4 L58.4 138.5 L64.9 136.1Z" fill="#dedede"/>
<path d="M62.4 134.6 L59.4 131.6 L55.5 128.6 L51.5 125.7 L49.6 121.7 L46.6 117.8 L44.6 113.9 L41.7 111.9 L37.7 111.3 L33.8 110.9 L29.9 112.5 L26.9 115.8 L25.9 119.8 L26.9 123.7 L25.5 127.7 L26.3 132.6 L27.5 137.5 L24.9 140.5 L23.9 144.4 L24.3 149.3 L25.9 153.3 L22.4 156.6 L23.9 160.2 L26.9 163.7 L30.8 166.1 L34.8 164.1 L37.7 167.1 L40.7 170.0 L43.3 174.0 L45.6 176.9 L47.6 180.9 L46.0 183.8 L48.6 186.8 L52.5 189.3 L55.1 192.7 L55.5 197.6 L57.4 202.5 L55.1 205.5 L58.4 207.5 L61.4 210.4 L62.4 215.3 L63.7 220.3 L64.3 226.8 L68.3 231.7 L72.2 236.7 L76.2 239.0 L78.1 243.6 L83.1 245.5 L86.0 250.5 L90.9 255.4 L95.9 259.9 L98.8 263.3 L100.4 269.2 L104.7 273.1 L109.7 278.1 L114.6 283.0 L120.0 290.9 L123.9 294.8 L127.9 298.7 L131.8 301.7 L136.7 302.7 L140.7 304.7 L143.3 305.0 L144.3 309.9 L143.0 314.9 L144.9 319.8 L147.3 324.7 L149.3 329.6 L153.2 331.6 L156.2 334.6 L157.1 338.5 L161.1 340.9 L166.0 343.4 L170.0 346.0 L173.3 348.7 L174.9 353.3 L176.8 357.2 L178.8 361.7 L174.9 363.1 L170.0 364.5 L166.0 365.7 L169.0 367.7 L173.3 370.0 L175.9 366.5 L178.8 367.1 L182.4 369.0 L184.4 369.1 L186.4 367.5 L188.4 369.6 L189.9 372.1 L190.8 374.6 L192.3 376.5 L193.8 378.5 L196.3 380.0 L198.7 381.9 L201.2 383.9 L203.6 385.9 L205.6 387.4 L207.6 388.8 L209.1 390.8 L211.0 392.3 L213.0 393.8 L215.0 395.2 L216.9 397.2 L218.9 399.2 L221.4 400.7 L223.8 401.4" fill="none" stroke="#fff" stroke-width="1" stroke-linejoin="round" stroke-linecap="round" opacity="0.85"/>
<path d="M225.8 401.7 L224.8 400.7 L223.3 398.7 L221.9 396.7 L220.4 394.8 L218.9 392.8 L217.4 390.8 L216.0 388.3 L214.0 386.4 L212.0 384.4 L210.0 382.4 L208.1 380.0 L205.6 377.5 L203.6 375.5 L201.7 373.6 L199.7 371.1 L196.6 366.1 L196.2 361.2 L197.5 357.2 L200.5 353.3 L201.5 349.3 L198.5 346.4 L195.6 343.4 L194.6 339.5 L197.5 335.5 L201.5 331.6 L203.4 327.7 L202.5 322.7 L199.5 318.8 L198.5 313.9 L200.5 308.9 L201.5 306.0 L199.8 311.6 L202.8 307.2 L207.7 306.6 L212.6 306.6 L216.6 306.0 L222.5 306.6 L228.0 305.6 L228.3 304.7 L228.9 299.7 L230.8 295.8 L233.8 291.8 L235.4 288.9 L237.7 286.9 L240.7 289.5 L244.6 291.5 L248.6 292.8 L252.5 292.2 L256.5 293.4 L260.4 295.4 L264.3 296.8 L268.3 295.8 L272.2 293.8 L276.2 291.8 L279.1 288.9 L282.1 285.9 L280.1 283.0 L277.1 280.0 L274.8 276.5 L271.2 275.1 L266.3 275.1 L261.4 276.1 L258.4 278.4 L256.5 282.0 L252.5 284.0 L247.6 283.6 L243.6 281.0 L238.7 279.6 L233.8 279.0 L230.8 276.1 L227.9 273.1 L228.9 270.2 L232.8 267.8 L237.7 267.2 L239.3 263.3 L241.7 258.3 L244.6 253.4 L247.6 248.5 L250.5 243.6 L253.5 239.6 L257.4 236.7 L262.4 233.7 L265.7 229.8 L264.9 224.9 L263.0 219.9 L261.8 215.0 L261.8 221.3 L261.4 217.3 L262.4 213.4 L265.3 210.4 L267.3 207.5 L270.2 204.5 L273.2 202.5 L276.2 199.6 L278.1 196.6 L281.1 192.7 L283.1 189.7 L284.0 185.8 L283.4 181.8 L281.1 180.9 L279.1 183.8 L277.1 186.8 L274.2 188.7 L270.2 187.8 L266.3 185.8 L262.4 183.8 L260.4 180.9 L260.4 176.9 L262.4 174.0 L265.7 172.0 L266.9 169.0 L264.3 166.1 L259.4 166.5 L254.5 168.1 L249.6 167.1 L245.6 164.1 L243.6 161.2 L244.6 158.2 L242.7 155.2 L240.7 151.3 L238.7 147.4 L235.8 146.0 L232.8 146.8 L229.9 150.3 L226.9 155.2 L223.9 159.2 L220.0 161.2 L217.7 162.5 L213.7 163.7 L212.8 166.1 L214.3 169.0 L217.7 171.0 L221.6 172.0 L225.6 173.0 L228.5 175.0 L231.5 177.9 L234.4 179.9 L233.4 181.8 L229.5 182.8 L224.6 183.8 L218.7 184.8 L213.7 185.4 L209.4 184.8 L208.1 177.6 L206.1 172.3 L202.2 169.7 L197.6 169.0 L193.7 171.0 L191.7 175.6 L193.0 180.2 L196.3 185.4 L197.6 190.7 L195.6 196.0 L190.4 199.2 L182.5 201.9 L176.0 205.8 L170.7 209.7 L161.5 209.7 L156.3 205.1 L152.7 200.3 L150.2 198.4 L148.3 197.4 L145.8 199.4 L143.3 199.9 L140.9 198.4 L138.9 198.9 L137.4 200.8 L137.9 203.8 L136.9 206.3 L135.5 208.2 L134.5 210.2 L135.5 212.7 L136.9 215.1 L138.4 217.6 L139.4 220.0 L140.9 222.5 L142.4 225.0 L143.2 227.4 L143.3 230.4 L142.9 233.8 L141.9 236.8 L140.4 239.3 L137.9 241.0 L135.0 241.7 L131.5 241.7 L129.1 241.0 L126.6 239.8 L124.6 237.8 L123.2 235.8 L121.2 233.8 L119.2 231.9 L117.2 229.9 L115.3 228.4 L113.8 226.5 L112.8 224.5 L111.3 222.5 L109.4 221.5 L107.4 219.6 L104.9 217.6 L102.5 215.6 L100.0 213.6 L95.5 213.0 L91.9 211.0 L89.0 208.4 L86.0 205.5 L83.1 202.5 L80.1 199.2 L77.5 195.6 L77.1 191.7 L80.1 190.1 L86.0 189.7 L91.9 189.7 L98.8 190.1 L104.7 190.1 L109.1 188.7 L111.6 185.8 L111.0 180.9 L109.7 175.9 L106.7 173.0 L105.7 169.0 L104.7 164.1 L102.8 159.8 L99.8 157.2 L95.9 156.6 L91.3 155.8 L89.0 153.3 L85.0 151.9 L80.1 150.7 L75.2 150.7 L71.6 152.3 L69.3 155.8 L64.9 150.7 L61.4 146.8 L59.4 142.4 L58.4 138.5 L64.9 136.1" fill="none" stroke="#fff" stroke-width="1.8" stroke-linejoin="round" stroke-linecap="round"/>
<path d="M218.8 123.2 L221.7 122.1 L224.5 123.8 L228.0 124.9 L232.0 125.5 L235.5 126.7 L237.8 129.0 L236.0 130.7 L233.7 131.8 L231.4 133.0 L229.7 134.7 L228.0 135.9 L226.3 134.7 L224.0 133.0 L221.7 131.3 L219.9 129.5 L218.6 127.2 L218.2 124.9Z" fill="#dedede" stroke="#fff" stroke-width="1.5" stroke-linejoin="round"/>
<path d="M242.9 131.3 L244.7 129.0 L247.5 127.8 L251.0 127.8 L254.4 129.0 L256.1 131.3 L257.9 133.6 L259.6 135.9 L261.9 137.6 L264.2 138.7 L264.8 140.5 L263.0 141.6 L260.7 142.8 L258.4 142.2 L255.6 141.3 L252.7 139.7 L249.8 137.8 L247.0 135.9 L244.7 133.9 L242.9 132.4Z" fill="#dedede" stroke="#fff" stroke-width="1.5" stroke-linejoin="round"/>
</svg>
<div class="abs c b" style="left:21px;top:417px;width:18px;height:18px;border:1px solid #111;border-top-color:#4a4a4a;border-left-color:#4a4a4a;background:#efefef;font-size:8.5px;line-height:14px">+</div>
<div class="abs c b" style="left:42px;top:417px;width:15px;height:18px;border:1px solid #111;border-top-color:#4a4a4a;border-left-color:#4a4a4a;background:#efefef;font-size:8.5px;line-height:16px">-</div>
<div class="abs" style="left:20.2px;top:442px;width:156.6px;height:36.7px;border-radius:4px;background:linear-gradient(#5bc0de,#2f96b4);border:1px solid #2a8aa6;border-top-color:#4ab0ce"></div>
<div class="t ar" style="left:29.4px;top:454.9px;font-size:9.4px;color:#fff;text-shadow:0 -1px 0 rgba(0,0,0,.25),0 0 0.6px #fff"><span style="letter-spacing:0.516px">Predsjednik Republike Srpske</span></div>
<div class="t ar" style="left:20.5px;top:482px;font-size:16px;color:#111"><span style="letter-spacing:-0.038px">Osnovna izborna jedinica</span></div>
<div class="sel" style="top:501px"></div>
<div class="t ar" style="left:27.5px;top:507px;font-size:10px">-</div>
<svg class="abs" style="left:320px;top:508px" width="12" height="9" viewBox="0 0 12 9"><path d="M2.1 2.1 L5.9 5.9 L9.7 2.1" fill="none" stroke="#444" stroke-width="2.1"/></svg>
<div class="t ar" style="left:20.5px;top:533.2px;font-size:16px;color:#111"><span style="letter-spacing:-0.040px">Biračko mjesto</span></div>
<div class="sel" style="top:552px"></div>
<div class="t ar" style="left:27.5px;top:558.2px;font-size:10px">-</div>
<svg class="abs" style="left:320px;top:559px" width="12" height="9" viewBox="0 0 12 9"><path d="M2.1 2.1 L5.9 5.9 L9.7 2.1" fill="none" stroke="#444" stroke-width="2.1"/></svg>
<!-- stats panel -->
<div class="panel" style="left:344px;top:65px;width:630px;height:73px"></div><div class="shb" style="left:345px;top:138px;width:632px;height:4px"></div><div class="shr" style="left:974px;top:66px;width:4px;height:75px"></div>
<div class="t navy" style="left:410.5px;top:76.8px;font-size:17px"><span style="letter-spacing:-0.397px">Broj birača</span></div>
<div class="t navy" style="left:586.8px;top:76.8px;font-size:17px"><span style="letter-spacing:-0.350px">Broj biračkih mjesta</span></div>
<div class="t navy" style="left:816.2px;top:76.8px;font-size:17px"><span style="letter-spacing:-0.331px">Broj kandidata</span></div>
<div class="t org" style="left:381.4px;top:105.5px;font-size:31.5px"><span style="letter-spacing:-0.823px">1.264.364</span></div>
<div class="t org" style="left:575.9px;top:105.5px;font-size:31.5px"><span style="letter-spacing:-0.317px">2.158/2.164</span></div>
<div class="t org" style="left:861px;top:105.5px;font-size:31.5px">6</div>
<!-- pies panel -->
<div class="panel" style="left:344px;top:155px;width:630px;height:165px"></div><div class="shb" style="left:345px;top:320px;width:632px;height:4px"></div><div class="shr" style="left:974px;top:156px;width:4px;height:167px"></div>
<div class="sw" style="left:352px;top:178px;background:#177e98"></div>
<div class="sw" style="left:352px;top:219px;background:#38b0d3"></div>
<div class="t leg" style="left:365.7px;top:169.5px"><span style="letter-spacing:0.186px">Izašlih na izbore -</span></div>
<div class="t b legb" style="left:446.0px;top:169.5px"><span style="display:inline-block;transform:scaleX(0.9414);transform-origin:0 50%">439.897</span></div>
<div class="t b legb" style="left:365.9px;top:189.9px"><span style="display:inline-block;transform:scaleX(1.0205);transform-origin:0 50%">(34,79%)</span></div>
<div class="t leg" style="left:365.7px;top:211.4px"><span style="letter-spacing:0.135px">Nije izašlo na izbore -</span></div>
<div class="t b legb" style="left:365.9px;top:230.8px"><span style="display:inline-block;transform:scaleX(0.9862);transform-origin:0 50%">824.467 (65,21%)</span></div>
<div class="sw" style="left:633px;top:178px;background:#177e98"></div>
<div class="sw" style="left:633px;top:219px;background:#38b0d3"></div>
<div class="sw" style="left:633px;top:271px;background:#8fd1e8"></div>
<div class="t leg" style="left:646.7px;top:169.5px"><span style="letter-spacing:0.045px">Važeći listići -</span></div>
<div class="t b legb" style="left:708.0px;top:169.5px"><span style="display:inline-block;transform:scaleX(0.9320);transform-origin:0 50%">432.035</span></div>
<div class="t b legb" style="left:646.9px;top:189.9px"><span style="display:inline-block;transform:scaleX(1.0163);transform-origin:0 50%">(98,21%)</span></div>
<div class="t leg" style="left:646.7px;top:211.4px"><span style="letter-spacing:0.052px">Nevažeći prazni listići -</span></div>
<div class="t b legb" style="left:748.1px;top:211.4px"><span style="display:inline-block;transform:scaleX(0.9398);transform-origin:0 50%">853</span></div>
<div class="t b legb" style="left:646.9px;top:230.8px"><span style="display:inline-block;transform:scaleX(1.0269);transform-origin:0 50%">(0,19%)</span></div>
<div class="t leg" style="left:646.7px;top:253.2px"><span style="letter-spacing:0.036px">Nevažeći listići po drugim</span></div>
<div class="t leg" style="left:646.7px;top:273.3px"><span style="letter-spacing:0.060px">kriterijumima -</span></div>
<div class="t b legb" style="left:713.6px;top:273.3px"><span style="display:inline-block;transform:scaleX(0.9307);transform-origin:0 50%">7.009</span></div>
<div class="t b legb" style="left:646.9px;top:292.7px"><span style="display:inline-block;transform:scaleX(1.0269);transform-origin:0 50%">(1,59%)</span></div>
<svg class="abs" style="left:517.6px;top:161.8px" width="93.0" height="93.0" viewBox="-46.5 -46.5 93.0 93.0">
<path d="M0 0 L0.00 -44.50 A44.5 44.5 0 0 1 36.34 25.68 Z" fill="#177e98" stroke="#fff" stroke-width="1.5" stroke-linejoin="round"/>
<path d="M0 0 L36.34 25.68 A44.5 44.5 0 1 1 -0.00 -44.50 Z" fill="#38b0d3" stroke="#fff" stroke-width="1.5" stroke-linejoin="round"/>
</svg>
<svg class="abs" style="left:798.9px;top:161.9px" width="92.8" height="92.8" viewBox="-46.4 -46.4 92.8 92.8">
<path d="M0 0 L0.00 -44.40 A44.4 44.4 0 1 1 -4.98 -44.12 Z" fill="#177e98" stroke="#fff" stroke-width="1.1" stroke-linejoin="round"/>
<path d="M0 0 L-4.98 -44.12 A44.4 44.4 0 0 1 -4.46 -44.18 Z" fill="#38b0d3" stroke="#fff" stroke-width="1.1" stroke-linejoin="round"/>
<path d="M0 0 L-4.46 -44.18 A44.4 44.4 0 0 1 -0.00 -44.40 Z" fill="#8fd1e8" stroke="#fff" stroke-width="1.1" stroke-linejoin="round"/>
</svg>
<!-- table -->
<div class="abs" style="left:345px;top:351px;width:629px;height:169px;background:#dadada"></div>
<div class="abs hd" style="left:346px;top:352px;width:42px;height:22px"></div>
<div class="abs hd" style="left:389px;top:352px;width:466px;height:22px"></div>
<div class="abs hd" style="left:856px;top:352px;width:77px;height:22px"></div>
<div class="abs hd" style="left:934px;top:352px;width:39px;height:22px"></div>
<div class="abs odd" style="left:346px;top:375px;width:42px;height:23px"></div>
<div class="abs odd" style="left:389px;top:375px;width:466px;height:23px"></div>
<div class="abs odd" style="left:856px;top:375px;width:77px;height:23px"></div>
<div class="abs odd" style="left:934px;top:375px;width:39px;height:23px"></div>
<div class="abs evn" style="left:346px;top:399px;width:42px;height:23px"></div>
<div class="abs evn" style="left:389px;top:399px;width:466px;height:23px"></div>
<div class="abs evn" style="left:856px;top:399px;width:77px;height:23px"></div>
<div class="abs evn" style="left:934px;top:399px;width:39px;height:23px"></div>
<div class="abs odd" style="left:346px;top:423px;width:42px;height:23px"></div>
<div class="abs odd" style="left:389px;top:423px;width:466px;height:23px"></div>
<div class="abs odd" style="left:856px;top:423px;width:77px;height:23px"></div>
<div class="abs odd" style="left:934px;top:423px;width:39px;height:23px"></div>
<div class="abs evn" style="left:346px;top:447px;width:42px;height:23px"></div>
<div class="abs evn" style="left:389px;top:447px;width:466px;height:23px"></div>
<div class="abs evn" style="left:856px;top:447px;width:77px;height:23px"></div>
<div class="abs evn" style="left:934px;top:447px;width:39px;height:23px"></div>
<div class="abs odd" style="left:346px;top:471px;width:42px;height:24px"></div>
<div class="abs odd" style="left:389px;top:471px;width:466px;height:24px"></div>
<div class="abs odd" style="left:856px;top:471px;width:77px;height:24px"></div>
<div class="abs odd" style="left:934px;top:471px;width:39px;height:24px"></div>
<div class="abs evn" style="left:346px;top:496px;width:42px;height:23px"></div>
<div class="abs evn" style="left:389px;top:496px;width:466px;height:23px"></div>
<div class="abs evn" style="left:856px;top:496px;width:77px;height:23px"></div>
<div class="abs evn" style="left:934px;top:496px;width:39px;height:23px"></div>
<div class="t b" style="left:354.7px;top:358.7px;color:#111"><span style="display:inline-block;transform:scaleX(0.9440);transform-origin:0 50%">Šifra</span></div>
<div class="t b" style="left:598.5px;top:358.7px;color:#111"><span style="display:inline-block;transform:scaleX(0.9787);transform-origin:0 50%">Kandidat</span></div>
<div class="t b" style="left:862.2px;top:358.7px;color:#111"><span style="display:inline-block;transform:scaleX(0.9831);transform-origin:0 50%">Broj glasova</span></div>
<div class="t b" style="left:947.9px;top:358.7px;color:#111"><span style="display:inline-block;transform:scaleX(1.1694);transform-origin:0 50%">%</span></div>
<div class="t" style="left:352.9px;top:382.0px;color:#111"><span style="letter-spacing:0.193px">00515</span></div>
<div class="t dvs" style="left:393.2px;top:382.0px;color:#111"><span style="letter-spacing:0.126px">SINIŠA KARAN - SAVEZ NEZAVISNIH SOCIJALDEMOKRATA - SNSD - MILORAD DODIK</span></div>
<div class="t" style="left:876.2px;top:382.0px;color:#111"><span style="letter-spacing:0.188px">217.324</span></div>
<div class="t" style="left:941.2px;top:382.0px;color:#111"><span style="letter-spacing:0.215px">50,30</span></div>
<div class="t" style="left:352.9px;top:407.0px;color:#111"><span style="letter-spacing:0.193px">00018</span></div>
<div class="t dvs" style="left:393.2px;top:407.0px;color:#111"><span style="letter-spacing:-0.001px">BRANKO BLANUŠA - SRPSKA DEMOKRATSKA STRANKA</span></div>
<div class="t" style="left:876.2px;top:407.0px;color:#111"><span style="letter-spacing:0.188px">208.955</span></div>
<div class="t" style="left:941.2px;top:407.0px;color:#111"><span style="letter-spacing:0.215px">48,37</span></div>
<div class="t" style="left:352.9px;top:431.0px;color:#111"><span style="letter-spacing:0.193px">01706</span></div>
<div class="t dvs" style="left:393.2px;top:431.0px;color:#111"><span style="letter-spacing:0.051px">DRAGAN ĐOKANOVIĆ - SAVEZ ZA NOVU POLITIKU</span></div>
<div class="t" style="left:882.0px;top:431.0px;color:#111"><span style="letter-spacing:0.090px">1.877</span></div>
<div class="t" style="left:943.7px;top:431.0px;color:#111"><span style="letter-spacing:0.406px">0,43</span></div>
<div class="t" style="left:352.9px;top:455.0px;color:#111"><span style="letter-spacing:0.193px">00879</span></div>
<div class="t dvs" style="left:393.2px;top:455.0px;color:#111"><span style="letter-spacing:0.104px">NIKOLA LAZAREVIĆ - EKOLOŠKA PARTIJA REPUBLIKE SRPSKE</span></div>
<div class="t" style="left:882.0px;top:455.0px;color:#111"><span style="letter-spacing:0.090px">1.583</span></div>
<div class="t" style="left:943.7px;top:455.0px;color:#111"><span style="letter-spacing:0.406px">0,37</span></div>
<div class="t" style="left:352.9px;top:479.0px;color:#111"><span style="letter-spacing:0.193px">02337</span></div>
<div class="t dvs" style="left:393.2px;top:479.0px;color:#111"><span style="letter-spacing:0.105px">IGOR GAŠEVIĆ - NEZAVISNI KANDIDAT</span></div>
<div class="t" style="left:882.0px;top:479.0px;color:#111"><span style="letter-spacing:0.090px">1.284</span></div>
<div class="t" style="left:943.7px;top:479.0px;color:#111"><span style="letter-spacing:0.406px">0,30</span></div>
<div class="t" style="left:352.9px;top:503.0px;color:#111"><span style="letter-spacing:0.193px">02362</span></div>
<div class="t dvs" style="left:393.2px;top:503.0px;color:#111"><span style="letter-spacing:0.100px">SLAVKO DRAGIČEVIĆ - NEZAVISNI KANDIDAT</span></div>
<div class="t" style="left:882.0px;top:503.0px;color:#111"><span style="letter-spacing:0.090px">1.012</span></div>
<div class="t" style="left:943.7px;top:503.0px;color:#111"><span style="letter-spacing:0.406px">0,23</span></div>
</body>
</html>
